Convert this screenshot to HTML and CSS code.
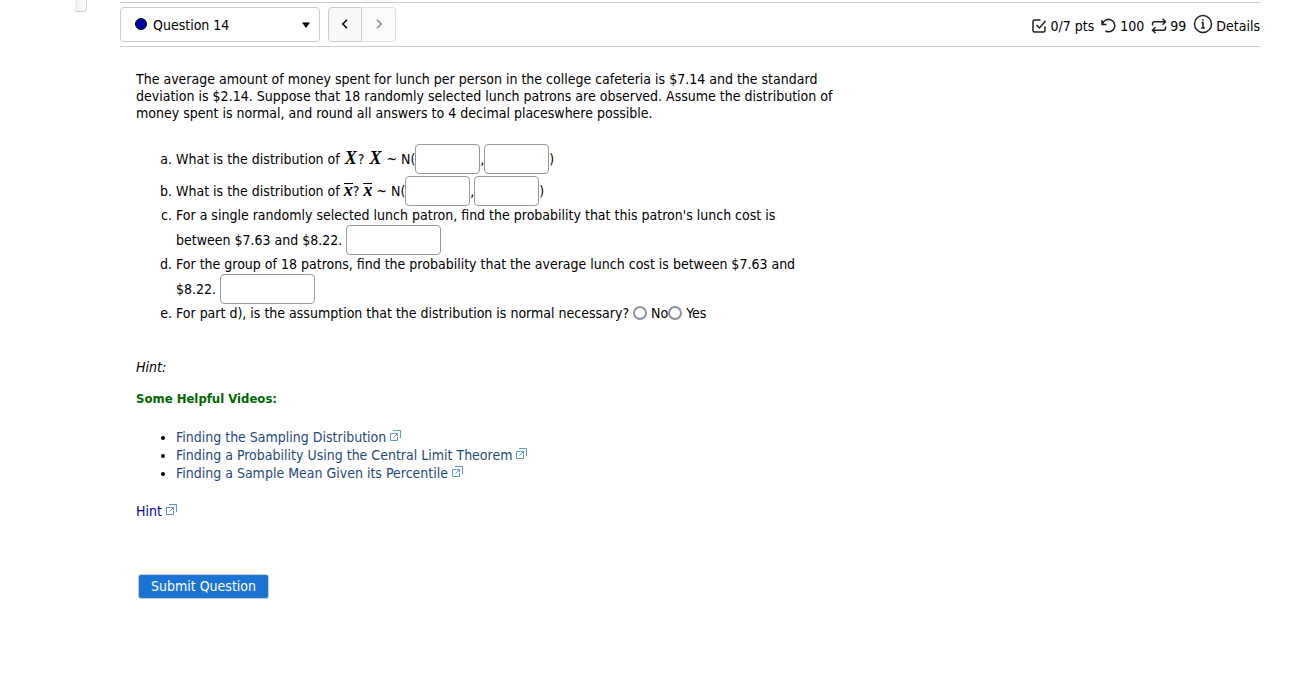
FILE: index.html
```html
<!DOCTYPE html>
<html lang="en">
<head>
<meta charset="utf-8">
<title>Question 14</title>
<link rel="stylesheet" href="styles.css">
</head>
<body>
<svg class="defs" aria-hidden="true">
  <symbol id="external" viewBox="0 0 11 11">
    <path d="M4 3.500H.5v7h7V7M3 .5h7.500V8M3.500 7.500l4-4M4.500 3.500h3v3" fill="none" stroke="#5b97cc"/>
  </symbol>
</svg>
<div class="drawer-tab"></div>
<main class="page">
  <header class="bar">
    <button class="picker" type="button">
      <span class="dot"></span><span class="picker-label">Question 14</span>
      <svg class="caret" viewBox="0 0 8 6"><path d="M0 .5h8L4 6z"/></svg>
    </button>
    <div class="pager">
      <button type="button" aria-label="Previous question"><svg viewBox="0 0 8 10"><path d="M6 .8L1.800 5 6 9.200"/></svg></button>
      <button type="button" aria-label="Next question" disabled><svg viewBox="0 0 8 10"><path d="M2 .8L6.200 5 2 9.200"/></svg></button>
    </div>
    <div class="status">
      <span class="stat"><svg class="icon" viewBox="0 0 16 16"><path d="M9.500 2H3.500Q2 2 2 3.500v9Q2 14 3.500 14h9q1.500 0 1.500-1.500V8.500M5.500 7l3 3L14.500 3"/></svg>0/7 pts</span>
      <span class="stat"><svg class="icon" viewBox="0 0 16 16"><path d="M1 2v4.500h4.500M1.500 6.200A6.200 6.200 0 1 1 4.500 13"/></svg>100</span>
      <span class="stat"><svg class="icon" viewBox="0 0 16 16"><path d="M11.500 .8l3 3-3 3M1.500 7.500V6q0-2.200 2.200-2.200h10.500M4.500 9.200l-3 3 3 3M14.500 8.500V10q0 2.200-2.200 2.200H1.800"/></svg>99</span>
      <a class="stat details" href="#"><svg class="icon info" viewBox="0 0 20 20"><circle cx="10" cy="10" r="8.500"/><path d="M8.500 8.500H10V14M8.200 14h3.600M9.200 5.900h1.600"/></svg>Details</a>
    </div>
  </header>
  <form class="question">
    <p class="intro">The average amount of money spent for lunch per person in the college cafeteria is $7.14 and the standard<br>deviation is $2.14. Suppose that 18 randomly selected lunch patrons are observed. Assume the distribution of<br>money spent is normal, and round all answers to 4 decimal placeswhere possible.</p>
    <ol class="parts">
      <li>What is the distribution of <i class="var single">X</i>? <i class="var single">X</i> ~ N(<input class="short" type="text" aria-label="Mean of X">,<input class="short" type="text" aria-label="Standard deviation of X">)</li>
      <li>What is the distribution of <i class="var mean">x</i>? <i class="var mean">x</i> ~ N(<input class="short" type="text" aria-label="Mean of x bar">,<input class="short" type="text" aria-label="Standard deviation of x bar">)</li>
      <li><label for="c">For a single randomly selected lunch patron, find the probability that this patron's lunch cost is<br>between $7.63 and $8.22.</label> <input class="long" type="text" id="c"></li>
      <li><label for="d">For the group of 18 patrons, find the probability that the average lunch cost is between $7.63 and<br>$8.22.</label> <input class="long" type="text" id="d"></li>
      <li>For part d), is the assumption that the distribution is normal necessary? <input type="radio" name="e" id="no"><label for="no">No</label><input type="radio" name="e" id="yes"><label for="yes">Yes</label></li>
    </ol>
    <p class="hint"><em>Hint:</em></p>
    <h2 class="videos-title">Some Helpful Videos:</h2>
    <ul class="videos">
      <li><a href="#">Finding the Sampling Distribution <svg class="ext"><use href="#external"/></svg></a></li>
      <li><a href="#">Finding a Probability Using the Central Limit Theorem <svg class="ext"><use href="#external"/></svg></a></li>
      <li><a href="#">Finding a Sample Mean Given its Percentile <svg class="ext"><use href="#external"/></svg></a></li>
    </ul>
    <p class="hint-link"><a href="#">Hint <svg class="ext"><use href="#external"/></svg></a></p>
    <button class="submit" type="button">Submit Question</button>
  </form>
</main>
</body>
</html>
```
FILE: styles.css
```css
* { box-sizing: border-box; }
body {
  margin: 0;
  background: #fff;
  color: #000;
  font: 14px/17px "DejaVu Sans Condensed", "Noto Sans", sans-serif;
}
button, input { font: inherit; color: inherit; }
a { text-decoration: none; }
.defs { position: absolute; width: 0; height: 0; }
.drawer-tab {
  position: absolute;
  top: 0;
  left: 75px;
  width: 12px;
  height: 12px;
  border: solid #cbd5df;
  border-width: 0 1px 1px 0;
  border-radius: 0 0 4px 0;
  background: linear-gradient(90deg, #eee, #fff);
}
.page { padding: 2px 51px 0 120px; }
.bar {
  display: flex;
  align-items: center;
  gap: 8px;
  height: 45px;
  border: solid #ccc;
  border-width: 1px 0;
}
.picker {
  display: flex;
  align-items: center;
  gap: 6px;
  width: 200px;
  height: 35px;
  padding: 0 9px 0 14px;
  border: 1px solid #ccc;
  border-radius: 4px;
  background: #fff;
}
.dot { width: 12px; height: 12px; margin-bottom: 2px; border: 1px solid #000; border-radius: 50%; background: #00a; }
.picker-label { flex: 1; padding-top: 2px; text-align: left; }
.caret { width: 8px; height: 6px; }
.pager { display: flex; }
.pager button {
  display: grid;
  place-items: center;
  width: 34px;
  height: 35px;
  padding: 0;
  border: 1px solid #ccc;
  background: #f8f8f8;
}
.pager button:first-child { border-radius: 4px 0 0 4px; }
.pager button:last-child { border-left: 0; border-color: #e2e2e2; border-radius: 0 4px 4px 0; background: #fbfbfb; }
.pager svg { width: 8px; height: 10px; margin-bottom: 2px; fill: none; stroke: #000; stroke-width: 1.5; }
.pager :disabled svg { stroke: #888; }
.status { display: flex; align-items: center; gap: 7px; margin-left: auto; }
.stat { display: flex; align-items: center; gap: 3px; padding-top: 4px; color: #000; }
.icon { width: 16px; height: 16px; margin-bottom: 2px; fill: none; stroke: #222; stroke-width: 1.5; }
.info { width: 20px; height: 20px; margin-bottom: 6px; }
.question { padding: 24px 16px 0; }
.intro { margin: 0 0 21px; }
.parts { margin: 0; padding-left: 40px; list-style: lower-alpha; }
.parts input[type="text"] {
  height: 30px;
  margin: 1px 0;
  padding: 4px;
  border: 1px solid #999;
  border-radius: 4px;
  background: #fff;
  vertical-align: baseline;
}
.parts .short { width: 65px; }
.parts .long { width: 95px; }
.parts input[type="radio"] {
  appearance: none;
  width: 14px;
  height: 14px;
  margin: 0 4px 0 0;
  border: 2px solid #8f8f9d;
  border-radius: 50%;
  background: #fff;
  vertical-align: -2px;
}
.var { font: italic bold 18px/16px "Liberation Serif", serif; }
.single { padding: 0 1px; }
.mean { display: inline-block; height: 12px; line-height: 12px; border-top: 1px solid #000; }
.hint { margin: 37px 0 14px; }
.videos-title { margin: 0 0 21px; color: #060; font-size: 13px; line-height: 17px; }
.videos { margin: 0 0 21px; padding-left: 40px; line-height: 18px; }
.videos a { color: #1f4a7d; }
.hint-link { margin: 0 0 54px; }
.hint-link a { color: #00a; }
.ext { width: 11px; height: 11px; vertical-align: 1px; }
.submit {
  display: block;
  height: 25px;
  margin-left: 2px;
  padding: 0 12px;
  border: 1px solid #ccc;
  border-radius: 3px;
  background: #1b74d4;
  color: #fff;
}
```
